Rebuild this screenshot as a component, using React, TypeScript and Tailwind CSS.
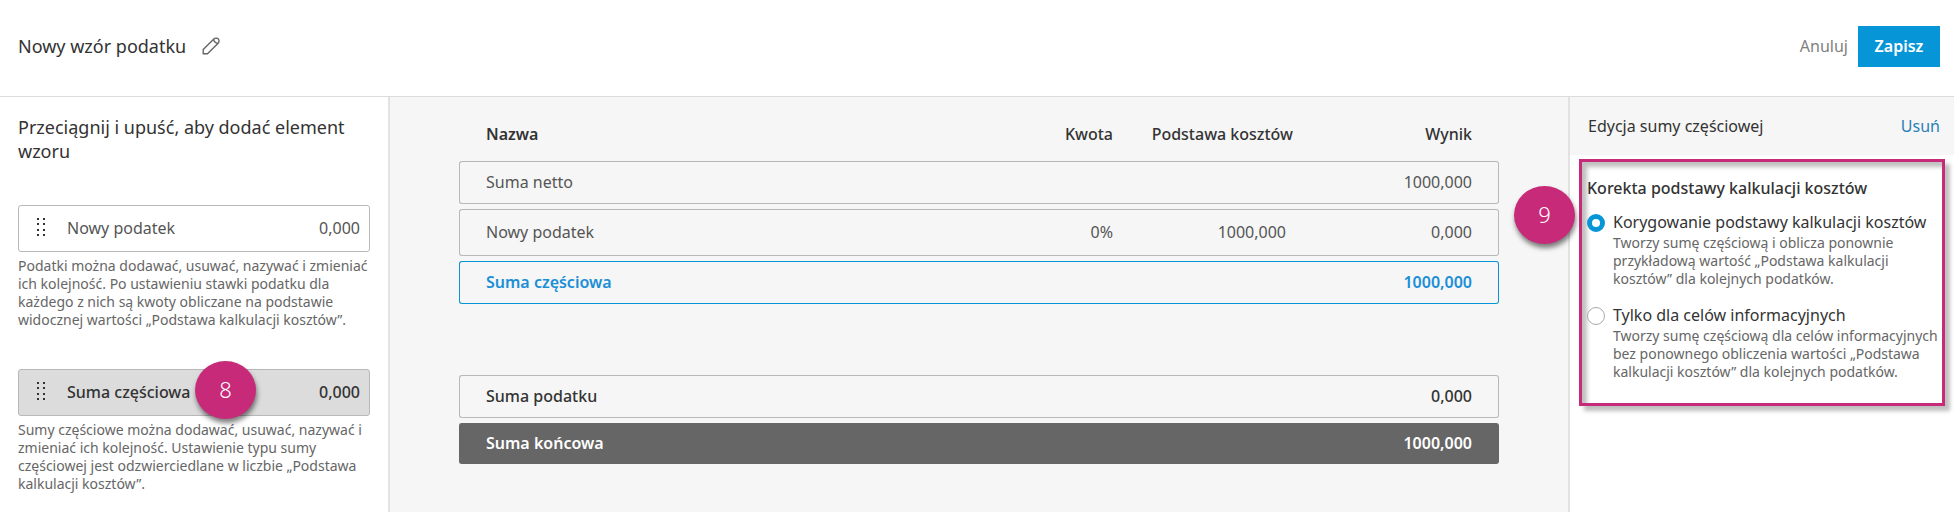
import { useState } from 'react';

const rows = [
  { name: 'Suma netto', rate: '', base: '', result: '1000,000', height: 'h-[43px]', cell: 'border-[#b8b8b8] text-[#555]' },
  { name: 'Nowy podatek', rate: '0%', base: '1000,000', result: '0,000', height: 'h-[47px]', cell: 'border-[#b8b8b8] text-[#555]' },
  { name: 'Suma częściowa', rate: '', base: '', result: '1000,000', height: 'h-[43px]', cell: 'border-[#0696d7] text-[#1a8fd6] font-semibold' },
];

const totals = [
  { name: 'Suma podatku', result: '0,000', height: 'h-[43px]', cell: 'border-[#b8b8b8] text-[#333] font-medium' },
  { name: 'Suma końcowa', result: '1000,000', height: 'h-[41px]', cell: 'border-[#666] bg-[#666] text-white font-semibold' },
];

const options = [
  {
    id: 'adjust',
    label: 'Korygowanie podstawy kalkulacji kosztów',
    text: 'Tworzy sumę częściową i oblicza ponownie przykładową wartość „Podstawa kalkulacji kosztów” dla kolejnych podatków.',
  },
  {
    id: 'info',
    label: 'Tylko dla celów informacyjnych',
    text: 'Tworzy sumę częściową dla celów informacyjnych bez ponownego obliczenia wartości „Podstawa kalkulacji kosztów” dla kolejnych podatków.',
  },
];

function PencilIcon() {
  return (
    <svg width="18" height="18" viewBox="0 0 18 18" fill="none" stroke="#666" strokeWidth="1.4" strokeLinejoin="round">
      <path d="M1.2 12.6 11.6 2.2C12.7 1.1 13.8.9 15 1.2c1 .3 1.6.9 1.9 1.9.3 1.1 0 2.3-1 3.3L5.5 16.8H1.2z" />
      <path d="M11.6 2.2c.3 2.2 2 3.9 4.3 4.2" />
    </svg>
  );
}

function DragHandle() {
  return (
    <svg width="8" height="19" viewBox="0 0 8 19" fill="#333">
      {[0, 5, 11, 16].map((y) => (
        <g key={y}>
          <rect x="0" y={y} width="2" height="2" />
          <rect x="6" y={y} width="2" height="2" />
        </g>
      ))}
    </svg>
  );
}

function Marker({ value, className }: { value: number; className: string }) {
  return (
    <span
      className={`absolute z-10 flex h-[58px] w-[61px] items-center justify-center rounded-[50%] bg-[#c72a78] pb-0.5 text-[22px] font-light text-white shadow-[1px_4px_5px_rgba(0,0,0,0.5)] ${className}`}
    >
      {value}
    </span>
  );
}

function Row({ row }: { row: any }) {
  return (
    <tr className={row.height}>
      <td className={`rounded-l-[3px] border-y border-l pb-0.5 pl-[26px] ${row.cell}`}>{row.name}</td>
      <td className={`border-y pb-0.5 text-right ${row.cell}`}>{row.rate}</td>
      <td className={`border-y pr-[7px] pb-0.5 text-right ${row.cell}`}>{row.base}</td>
      <td className={`rounded-r-[3px] border-y border-r pr-[26px] pb-0.5 text-right ${row.cell}`}>{row.result}</td>
    </tr>
  );
}

export default function App() {
  const [selected, setSelected] = useState('adjust');

  return (
    <div className="flex min-h-screen flex-col bg-white font-['Noto_Sans',sans-serif] text-base text-[#333]">
      <header className="flex h-[97px] items-center border-b border-[#dcdcdc] pr-3.5 pb-1 pl-[18px]">
        <h1 className="text-lg">Nowy wzór podatku</h1>
        <button aria-label="Edytuj nazwę" className="ml-4">
          <PencilIcon />
        </button>
        <button className="ml-auto text-[#808080]">Anuluj</button>
        <button className="ml-2.5 h-[41px] w-[82px] bg-[#0696d7] font-semibold text-white">Zapisz</button>
      </header>

      <div className="flex flex-1">
        <aside className="w-[390px] shrink-0 border-r-2 border-[#e2e2e2] px-[18px] pt-[18px]">
          <h2 className="text-lg leading-6">Przeciągnij i upuść, aby dodać element wzoru</h2>

          <div className="mt-[42px] flex h-[47px] items-center rounded-[3px] border border-[#b8b8b8] pr-[9px] pb-0.5 pl-[18px] text-[#555]">
            <DragHandle />
            <span className="ml-[22px]">Nowy podatek</span>
            <span className="ml-auto">0,000</span>
          </div>
          <p className="mt-[5px] text-sm leading-[18px] text-[#666]">
            Podatki można dodawać, usuwać, nazywać i zmieniać ich kolejność. Po ustawieniu stawki podatku dla każdego z nich są kwoty obliczane na podstawie widocznej wartości „Podstawa kalkulacji kosztów”.
          </p>

          <div className="relative mt-10 flex h-[47px] items-center rounded-[3px] border border-[#b8b8b8] bg-[#dcdcdc] pr-[9px] pb-0.5 pl-[18px] font-medium">
            <DragHandle />
            <span className="ml-[22px]">Suma częściowa</span>
            <span className="ml-auto">0,000</span>
            <Marker value={8} className="-top-[9px] left-44" />
          </div>
          <p className="mt-[5px] text-sm leading-[18px] text-[#666]">
            Sumy częściowe można dodawać, usuwać, nazywać i zmieniać ich kolejność. Ustawienie typu sumy częściowej jest odzwierciedlane w liczbie „Podstawa kalkulacji kosztów”.
          </p>
        </aside>

        <main className="min-w-0 flex-1 bg-[#f6f6f6] px-[69px]">
          <table className="mt-[10px] w-full table-fixed border-separate border-spacing-x-0 border-spacing-y-[5px]">
            <colgroup>
              <col />
              <col className="w-[150px]" />
              <col className="w-[180px]" />
              <col className="w-[206px]" />
            </colgroup>
            <thead>
              <tr className="h-11">
                <th className="pl-[27px] text-left font-semibold">Nazwa</th>
                <th className="text-right font-medium">Kwota</th>
                <th className="text-right font-medium">Podstawa kosztów</th>
                <th className="pr-[27px] text-right font-medium">Wynik</th>
              </tr>
            </thead>
            <tbody>
              {rows.map((row) => (
                <Row key={row.name} row={row} />
              ))}
              <tr className="h-[61px]">
                <td colSpan={4}></td>
              </tr>
              {totals.map((row) => (
                <Row key={row.name} row={row} />
              ))}
            </tbody>
          </table>
        </main>

        <aside className="w-[386px] shrink-0 border-l-2 border-[#e2e2e2]">
          <div className="flex h-[58px] items-center justify-between bg-[#f6f6f6] pr-3.5 pl-[18px]">
            <h2>Edycja sumy częściowej</h2>
            <button className="text-[#2a7fb8]">Usuń</button>
          </div>

          <section className="relative mx-[9px] mt-1 h-[247px] border-[3px] border-[#c72a78] pt-3.5 pl-[5px] shadow-[5px_5px_4px_rgba(0,0,0,0.25),inset_5px_5px_4px_rgba(0,0,0,0.25)]">
            <Marker value={9} className="top-6 -left-[68px]" />
            <h3 id="base-title" className="leading-6 font-medium">
              Korekta podstawy kalkulacji kosztów
            </h3>
            <div role="radiogroup" aria-labelledby="base-title" className="mt-2.5 flex flex-col gap-[15px]">
              {options.map((option) => (
                <div key={option.id} className="flex items-start gap-2">
                  <input
                    type="radio"
                    id={option.id}
                    name="base"
                    checked={selected === option.id}
                    onChange={() => setSelected(option.id)}
                    aria-describedby={`${option.id}-text`}
                    className="mt-1 h-[18px] w-[18px] shrink-0 appearance-none rounded-full border border-[#aaa] bg-white checked:border-[5px] checked:border-[#0696d7]"
                  />
                  <div>
                    <label htmlFor={option.id} className="block leading-6">
                      {option.label}
                    </label>
                    <p id={`${option.id}-text`} className="text-sm leading-[18px] text-[#666]">
                      {option.text}
                    </p>
                  </div>
                </div>
              ))}
            </div>
          </section>
        </aside>
      </div>
    </div>
  );
}
